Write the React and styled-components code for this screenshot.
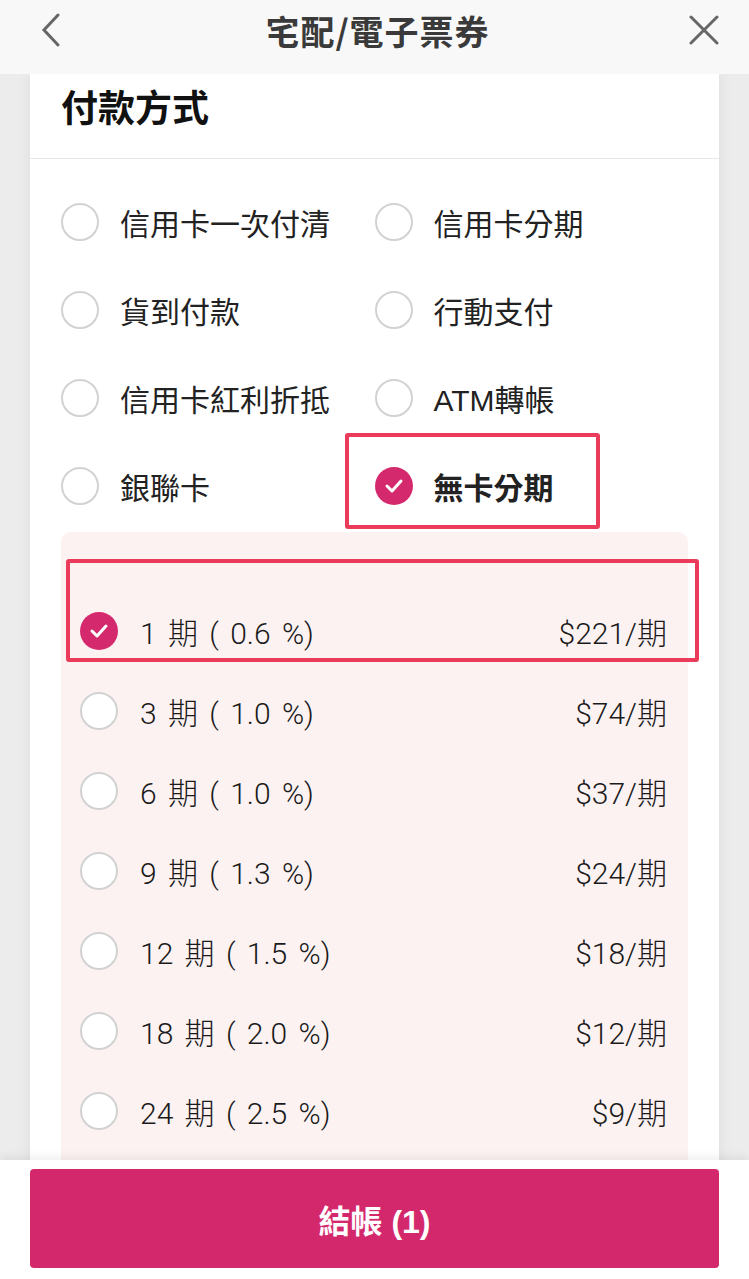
import styled, { createGlobalStyle } from "styled-components";

const GlobalStyle = createGlobalStyle`
  html, body {
    margin: 0;
    padding: 0;
    background: #ececec;
  }
  body {
    font-family: "Liberation Sans", "Noto Sans CJK TC", sans-serif;
    color: #222;
  }
  *, *::before, *::after { box-sizing: border-box; }
`;

const Page = styled.div`
  height: 100vh;
  display: flex;
  flex-direction: column;
  overflow: hidden;
`;

const Header = styled.div`
  height: 74px;
  flex-shrink: 0;
  background: #f8f8f8;
  display: flex;
  align-items: center;
  justify-content: space-between;
  padding: 0 29px 14px 35px;
  position: relative;
  z-index: 2;
`;

const HeaderTitle = styled.div`
  font-family: "Noto Sans CJK TC", sans-serif;
  font-size: 34px;
  font-weight: 700;
  color: #3a3a3a;
  letter-spacing: 1px;
`;

const IconButton = styled.div`
  width: 32px;
  height: 34px;
  display: flex;
  align-items: center;
  justify-content: center;
`;

const Body = styled.div`
  flex: 1;
  overflow: hidden;
  padding: 0 30px;
  background: #ececec;
`;

const Card = styled.div`
  background: #fff;
  min-height: 100%;
  box-shadow: 0 0 14px rgba(0, 0, 0, 0.07);
`;

const CardTitle = styled.h2`
  margin: 0;
  height: 85px;
  padding: 12px 31px 0;
  font-family: "Noto Sans CJK TC", sans-serif;
  font-size: 37px;
  line-height: 40px;
  font-weight: 700;
  color: #111;
  border-bottom: 1px solid #e8e8e8;
`;

const OptionGrid = styled.div`
  display: grid;
  grid-template-columns: 1fr 1fr;
  grid-auto-rows: 88px;
  padding: 19px 31px 0;
  margin-bottom: 2px;
`;

const Option = styled.div`
  display: flex;
  align-items: center;
  gap: 21px;
  position: relative;
  font-size: 30px;
  font-weight: ${(p) => (p.$selected ? 700 : 400)};
  color: #222;

  ${(p) =>
    p.$highlight &&
    `
    &::after {
      content: "";
      position: absolute;
      left: -30px;
      top: -9px;
      width: 255px;
      height: 96px;
      border: 4px solid #ea3b5a;
      border-radius: 3px;
    }
  `}
`;

const RadioCircle = styled.div`
  width: 38px;
  height: 38px;
  border-radius: 50%;
  flex-shrink: 0;
  border: ${(p) => (p.$checked ? "none" : "2px solid #d2d2d2")};
  background: ${(p) => (p.$checked ? "#d42a6d" : "#fff")};
  display: flex;
  align-items: center;
  justify-content: center;
`;

const Panel = styled.div`
  margin: 0 31px;
  padding: 59px 21px 40px 19px;
  background: #fdf2f2;
  border-radius: 10px;
`;

const InstallmentRow = styled.div`
  height: 80px;
  display: flex;
  align-items: center;
  position: relative;
  font-family: Roboto, "Noto Sans CJK TC", sans-serif;
  font-size: 30px;
  font-weight: 300;
  color: #1a1a1a;

  ${(p) =>
    p.$highlight &&
    `
    &::after {
      content: "";
      position: absolute;
      left: -14px;
      right: -32px;
      top: -32px;
      bottom: 9px;
      border: 4px solid #ea3b5a;
      border-radius: 3px;
    }
  `}
`;

const RowLabel = styled.span`
  margin-left: 22px;
  flex: 1;
  word-spacing: 4px;
`;

const Price = styled.span``;

const Footer = styled.div`
  height: 119px;
  flex-shrink: 0;
  background: #fff;
  padding: 9px 30px 0;
  position: relative;
  box-shadow: 0 -4px 8px rgba(0, 0, 0, 0.06);
  z-index: 2;
`;

const CheckoutButton = styled.button`
  width: 100%;
  height: 99px;
  border: none;
  border-radius: 4px;
  background: #d4286d;
  color: #fff;
  font-family: "Liberation Sans", "Noto Sans CJK TC", sans-serif;
  font-size: 32px;
  font-weight: 700;
`;

const Radio = ({ checked }) => (
  <RadioCircle $checked={checked}>
    {checked && (
      <svg width="20" height="16" viewBox="0 0 20 16">
        <polyline
          points="3,8 8,13 17,3"
          fill="none"
          stroke="#fff"
          strokeWidth="3"
          strokeLinecap="round"
          strokeLinejoin="round"
        />
      </svg>
    )}
  </RadioCircle>
);

const methods = [
  "信用卡一次付清",
  "信用卡分期",
  "貨到付款",
  "行動支付",
  "信用卡紅利折抵",
  "ATM轉帳",
  "銀聯卡",
  "無卡分期",
];

const plans = [
  ["1 期 ( 0.6 %)", "$221/期"],
  ["3 期 ( 1.0 %)", "$74/期"],
  ["6 期 ( 1.0 %)", "$37/期"],
  ["9 期 ( 1.3 %)", "$24/期"],
  ["12 期 ( 1.5 %)", "$18/期"],
  ["18 期 ( 2.0 %)", "$12/期"],
  ["24 期 ( 2.5 %)", "$9/期"],
];

export default function App() {
  const selected = "無卡分期";
  return (
    <Page>
      <GlobalStyle />
      <Header>
        <IconButton>
          <svg width="20" height="34" viewBox="0 0 20 34">
            <polyline points="17,2 3,17 17,32" fill="none" stroke="#666" strokeWidth="3" strokeLinecap="round" />
          </svg>
        </IconButton>
        <HeaderTitle>宅配/電子票券</HeaderTitle>
        <IconButton>
          <svg width="30" height="30" viewBox="0 0 30 30">
            <path d="M2 2 L28 28 M28 2 L2 28" stroke="#666" strokeWidth="3" strokeLinecap="round" />
          </svg>
        </IconButton>
      </Header>
      <Body>
        <Card>
          <CardTitle>付款方式</CardTitle>
          <OptionGrid>
            {methods.map((m) => (
              <Option key={m} $selected={m === selected} $highlight={m === selected}>
                <Radio checked={m === selected} />
                {m}
              </Option>
            ))}
          </OptionGrid>
          <Panel>
            {plans.map(([label, price], i) => (
              <InstallmentRow key={label} $highlight={i === 0}>
                <Radio checked={i === 0} />
                <RowLabel>{label}</RowLabel>
                <Price>{price}</Price>
              </InstallmentRow>
            ))}
          </Panel>
        </Card>
      </Body>
      <Footer>
        <CheckoutButton>結帳 (1)</CheckoutButton>
      </Footer>
    </Page>
  );
}
